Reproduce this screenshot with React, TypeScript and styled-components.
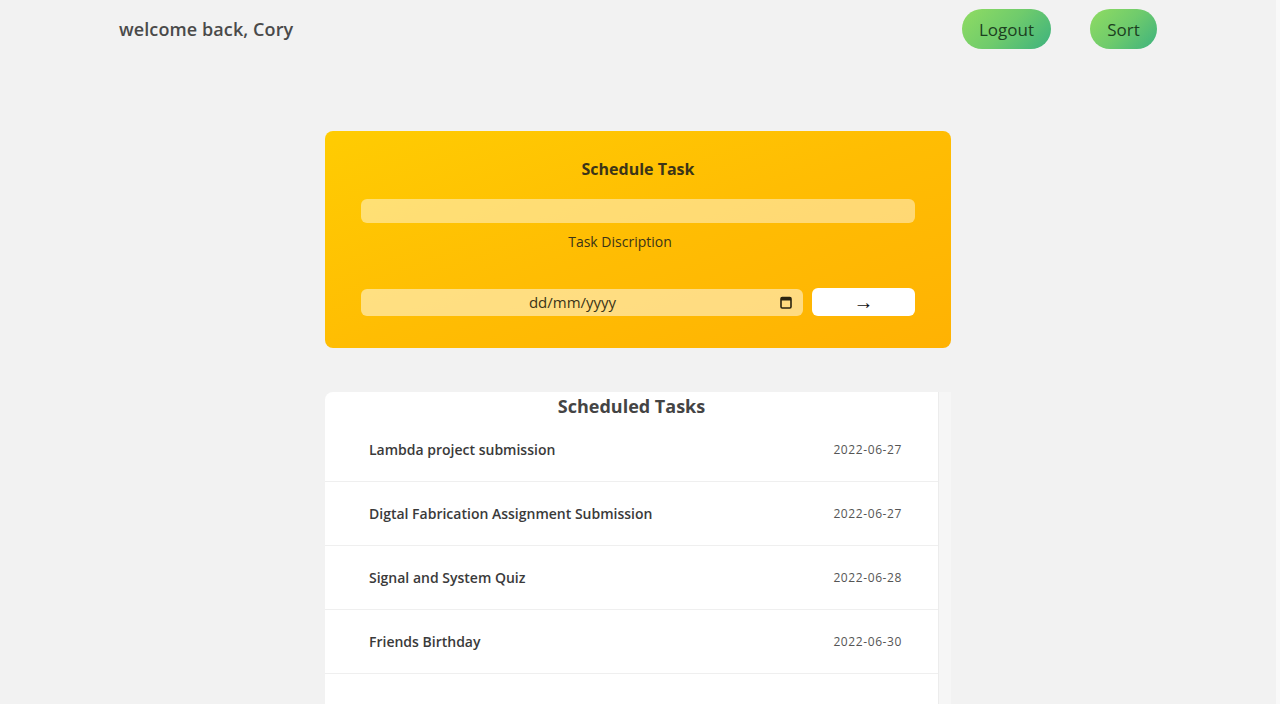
import styled, { createGlobalStyle } from "styled-components";

const GlobalStyle = createGlobalStyle`
  body {
    margin: 0;
    background: #f2f2f2;
    font-family: "Open Sans", "Noto Sans", sans-serif;
    color: #333;
  }
  * {
    box-sizing: border-box;
  }
`;

const Page = styled.div`
  width: 1280px;
  min-height: 100vh;
  border-right: 4px solid #f9f9f9;
`;

const Header = styled.header`
  display: flex;
  align-items: center;
  justify-content: space-between;
  height: 58px;
  padding: 0 119px;
`;

const Welcome = styled.h1`
  margin: 0;
  font-size: 18px;
  font-weight: 600;
  color: #4a4a4a;
  letter-spacing: 0.1px;
`;

const HeaderActions = styled.div`
  display: flex;
  gap: 39px;
`;

const PillButton = styled.button<{ $width: number }>`
  width: ${({ $width }) => `${$width}px`};
  height: 40px;
  border: none;
  border-radius: 20px;
  background: linear-gradient(135deg, #90dc62 0%, #6fcb6c 50%, #3db27e 100%);
  color: #1c3f1f;
  font-family: inherit;
  font-size: 17px;
  cursor: pointer;
`;

const Main = styled.main`
  display: flex;
  flex-direction: column;
  align-items: center;
  padding-top: 73px;
`;

const ScheduleCard = styled.section`
  width: 626px;
  padding: 26px 36px 32px;
  border-radius: 8px;
  background: linear-gradient(160deg, #ffcc02 0%, #ffbd03 50%, #ffb203 100%);
  display: flex;
  flex-direction: column;
`;

const CardTitle = styled.h2`
  margin: 0 0 18px;
  text-align: center;
  font-size: 16px;
  line-height: 24px;
  font-weight: 700;
  color: #3b3418;
`;

const TextField = styled.input`
  height: 24px;
  border: none;
  border-radius: 6px;
  background: rgba(255, 255, 255, 0.45);
  outline: none;
  padding: 0 10px;
`;

const FieldLabel = styled.label`
  display: block;
  margin: 9px 0 36px;
  padding-right: 36px;
  text-align: center;
  font-size: 14px;
  line-height: 20px;
  color: #3b3418;
`;

const SubmitRow = styled.div`
  display: flex;
  align-items: center;
  gap: 9px;
`;

const DateField = styled.div`
  flex: 1;
  height: 27px;
  border-radius: 6px;
  background: rgba(255, 255, 255, 0.5);
  display: flex;
  align-items: center;
  padding: 0 11px 0 0;
  color: #3b3418;
  font-size: 15px;
`;

const DateText = styled.span`
  flex: 1;
  text-align: center;
  padding-left: 4px;
`;

const ArrowButton = styled.button`
  width: 103px;
  height: 28px;
  border: none;
  border-radius: 6px;
  background: #fff;
  padding: 0;
  font-size: 20px;
  line-height: 26px;
  color: #111;
  cursor: pointer;
  font-family: "Liberation Sans", sans-serif;
`;

const ListCard = styled.section`
  display: flex;
  width: 626px;
  height: 420px;
  margin-top: 44px;
`;

const ListBody = styled.div`
  flex: 1;
  background: #fff;
  border-radius: 8px 0 0 0;
`;

const ScrollTrack = styled.div`
  width: 13px;
  background: #f6f6f6;
  border-left: 1px solid #ececec;
`;

const ListTitle = styled.h2`
  margin: 0;
  height: 26px;
  text-align: center;
  font-size: 18px;
  line-height: 28px;
  font-weight: 700;
  color: #444;
`;

const TaskRow = styled.div`
  display: flex;
  align-items: center;
  justify-content: space-between;
  height: 64px;
  padding: 0 36px 0 44px;
  border-bottom: 1px solid #efefef;
`;

const TaskName = styled.span`
  font-size: 14px;
  font-weight: 600;
  color: #3a3a3a;
`;

const TaskDate = styled.span`
  font-size: 12px;
  color: #555;
  letter-spacing: 0.6px;
`;

const CalendarIcon = () => (
  <svg width="12" height="13" viewBox="0 0 12 13" fill="none">
    <rect x="1" y="1.5" width="10" height="10.5" rx="1.2" stroke="#2b2410" strokeWidth="1.6" />
    <rect x="1" y="1.5" width="10" height="3" fill="#2b2410" />
  </svg>
);

const tasks = [
  { name: "Lambda project submission", date: "2022-06-27" },
  { name: "Digtal Fabrication Assignment Submission", date: "2022-06-27" },
  { name: "Signal and System Quiz", date: "2022-06-28" },
  { name: "Friends Birthday", date: "2022-06-30" },
  { name: "", date: "" },
];

export default function App() {
  return (
    <Page>
      <GlobalStyle />
      <Header>
        <Welcome>welcome back, Cory</Welcome>
        <HeaderActions>
          <PillButton $width={89}>Logout</PillButton>
          <PillButton $width={67}>Sort</PillButton>
        </HeaderActions>
      </Header>
      <Main>
        <ScheduleCard>
          <CardTitle>Schedule Task</CardTitle>
          <TextField id="task" />
          <FieldLabel htmlFor="task">Task Discription</FieldLabel>
          <SubmitRow>
            <DateField>
              <DateText>dd/mm/yyyy</DateText>
              <CalendarIcon />
            </DateField>
            <ArrowButton>→</ArrowButton>
          </SubmitRow>
        </ScheduleCard>
        <ListCard>
          <ListBody>
            <ListTitle>Scheduled Tasks</ListTitle>
            {tasks.map((task, i) => (
              <TaskRow key={i}>
                <TaskName>{task.name}</TaskName>
                <TaskDate>{task.date}</TaskDate>
              </TaskRow>
            ))}
          </ListBody>
          <ScrollTrack />
        </ListCard>
      </Main>
    </Page>
  );
}
